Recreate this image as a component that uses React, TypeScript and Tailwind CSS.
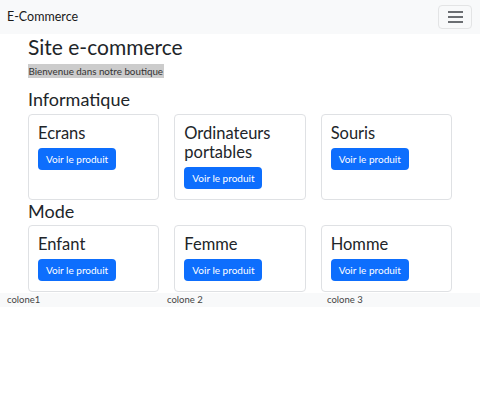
const font = { fontFamily: "Lato, 'Open Sans', sans-serif" };

const sections = [
  { title: "Informatique", items: ["Ecrans", "Ordinateurs portables", "Souris"] },
  { title: "Mode", items: ["Enfant", "Femme", "Homme"] },
];

const ProductCard = ({ name }: { name: string }) => (
  <div className="rounded-[4px] border border-[#dfe1e4] bg-white px-[9px] pb-[10px] pt-[9px]">
    <h5 className="mb-[5px] text-[16.5px] leading-[19px] text-[#212529]">
      {name}
    </h5>
    <button className="block h-[22px] rounded-[4px] bg-[#0d6efd] px-[8px] text-[10px] leading-[22px] text-white">
      Voir le produit
    </button>
  </div>
);

export default function App() {
  return (
    <div className="w-[480px] bg-white" style={font}>
      <nav className="flex h-[34px] items-center justify-between bg-[#f8f9fa] pl-[7px] pr-[8px]">
        <span className="text-[12.5px] text-[#1a1a1a]">E-Commerce</span>
        <button className="flex h-[24px] w-[34px] flex-col items-center justify-center gap-[3.5px] rounded-[4px] border border-[#e3e4e5]">
          <span className="h-[1.5px] w-[15px] bg-[#6b6e72]" />
          <span className="h-[1.5px] w-[15px] bg-[#6b6e72]" />
          <span className="h-[1.5px] w-[15px] bg-[#6b6e72]" />
        </button>
      </nav>

      <main className="mx-[28px] text-[#212529]">
        <h1 className="text-[21px] leading-[26px]">Site e-commerce</h1>
        <p className="mt-[4px] flex">
          <span className="bg-[#cccccc] px-[0.5px] text-[9.8px] leading-[14px] text-[#333]">
            Bienvenue dans notre boutique
          </span>
        </p>

        {sections.map((section, i) => (
          <section key={section.title} className={i === 0 ? "mt-[10px]" : ""}>
            <h2 className="text-[18px] leading-[22px]">{section.title}</h2>
            <div
              className={`grid grid-cols-3 gap-[15px] ${i === 0 ? "mt-[4px]" : "mt-[3px]"}`}
            >
              {section.items.map((item) => (
                <ProductCard key={item} name={item} />
              ))}
            </div>
          </section>
        ))}
      </main>

      <footer className="mt-[1px] grid h-[14px] grid-cols-3 bg-[#f8f9fa] text-[9.5px] leading-[14px] text-[#444]">
        <span className="pl-[7px]">colone1</span>
        <span className="pl-[7px]">colone 2</span>
        <span className="pl-[7px]">colone 3</span>
      </footer>
    </div>
  );
}
